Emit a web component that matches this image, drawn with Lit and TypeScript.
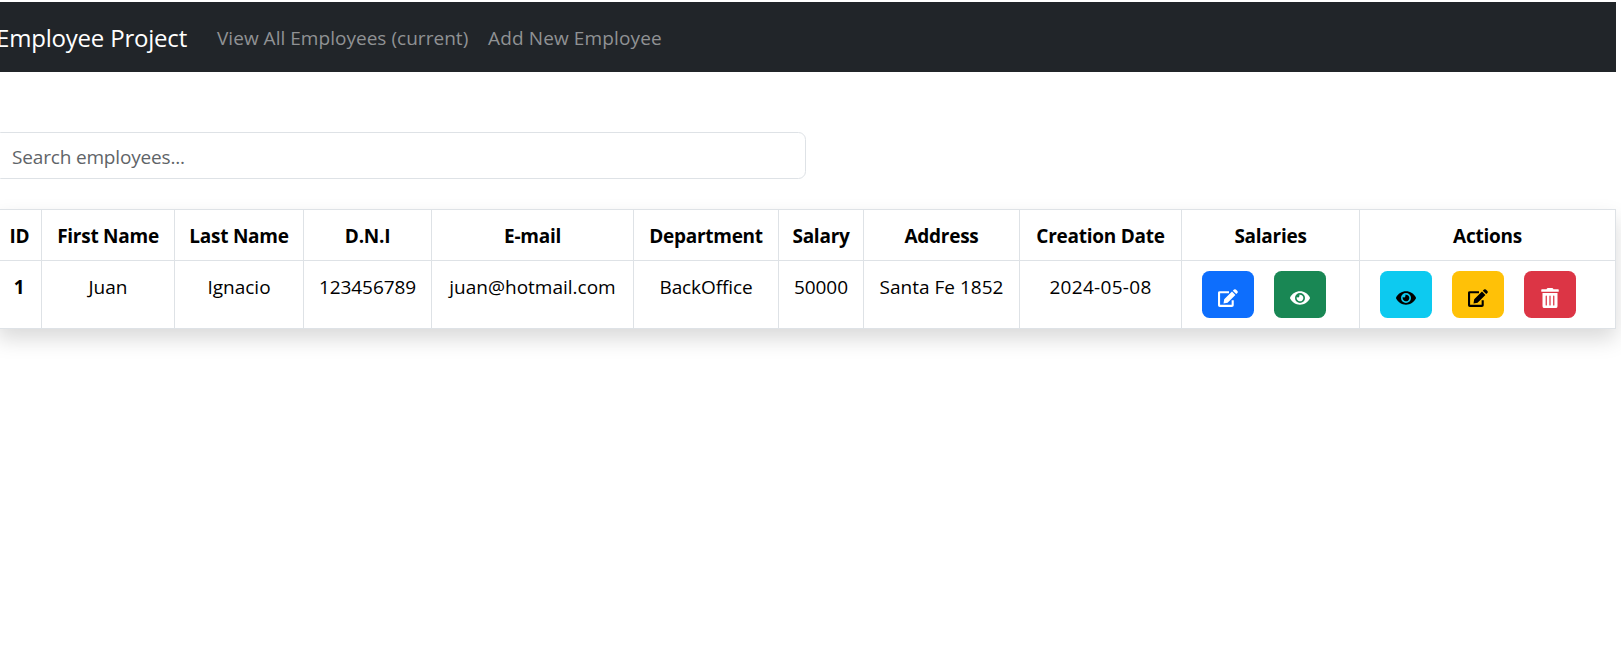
import { LitElement, html, css, svg } from "lit";
import { customElement } from "lit/decorators.js";

const EYE = svg`<svg class="icon" viewBox="0 0 576 512" width="20" height="18"><path fill="currentColor" d="M572.52 241.4C518.29 135.59 410.93 64 288 64S57.68 135.64 3.48 241.41a32.35 32.35 0 0 0 0 29.19C57.71 376.41 165.07 448 288 448s230.32-71.64 284.52-177.41a32.35 32.35 0 0 0 0-29.19zM288 400a144 144 0 1 1 144-144 143.93 143.93 0 0 1-144 144zm0-240a95.31 95.31 0 0 0-25.31 3.79 47.85 47.85 0 0 1-66.9 66.9A95.78 95.78 0 1 0 288 160z"/></svg>`;
const EDIT = svg`<svg class="icon" viewBox="0 0 20 18" width="20" height="18"><path fill="none" stroke="currentColor" stroke-width="2.1" d="M11 3.200H1.800Q1.050 3.200 1.050 3.900V16.200Q1.050 16.900 1.800 16.900H13.900Q14.700 16.900 14.700 16.200V11.200"/><path fill="currentColor" d="M14 2.500 17.400 5.900 9.600 13.700 5.500 14.500 6.200 10.300zM14.800 1.700 16 .6Q17 -.2 17.900.6L19.400 2.100Q20.200 3.100 19.400 3.900L18.200 5.100z"/></svg>`;
const TRASH = svg`<svg class="icon" viewBox="0 0 448 512" width="18" height="20"><path fill="currentColor" d="M32 464a48 48 0 0 0 48 48h288a48 48 0 0 0 48-48V128H32zm272-256a16 16 0 0 1 32 0v224a16 16 0 0 1-32 0zm-96 0a16 16 0 0 1 32 0v224a16 16 0 0 1-32 0zm-96 0a16 16 0 0 1 32 0v224a16 16 0 0 1-32 0zM432 32H312l-9.400-18.700A24 24 0 0 0 281.100 0H166.800a23.720 23.720 0 0 0-21.400 13.300L136 32H16A16 16 0 0 0 0 48v32a16 16 0 0 0 16 16h416a16 16 0 0 0 16-16V48a16 16 0 0 0-16-16z"/></svg>`;

@customElement("app-root")
export class AppRoot extends LitElement {
  static styles = css`
    :host { display: flow-root; height: 665px; overflow: hidden; background: #fff; color: #000;
      font: 19px/30px "Open Sans", "Noto Sans", sans-serif; }
    * { box-sizing: border-box; }
    nav { display: flex; align-items: center; height: 70px; width: 1616px; margin-top: 2px; padding-top: 2px; background: #212529; }
    a { color: #909294; text-decoration: none; white-space: nowrap; }
    .brand { color: #fff; font-size: 24px; margin-left: -4px; width: 221px; letter-spacing: -0.2px; }
    .view { width: 271px; letter-spacing: 0.03px; }
    .add { letter-spacing: 0.13px; }
    input { display: block; margin: 60px 0 0 -7px; width: 813px; height: 47px; padding: 3px 18px 0; border: 1px solid #dee2e6;
      border-radius: 7.5px; font: inherit; letter-spacing: -0.17px; outline: 0; background: #fff; }
    input::placeholder { color: #5f6468; opacity: 1; }
    table { table-layout: fixed; border-collapse: separate; border-spacing: 0; width: 1619px; margin: 30px 0 0 -3px;
      border: solid #dee2e6; border-width: 1px 0 0 1px; box-shadow: 0 10px 20px rgba(0,0,0,.15); text-align: center; }
    th, td { border: solid #dee2e6; border-width: 0 1px 1px 0; padding: 11px 0 0; vertical-align: top; white-space: nowrap; letter-spacing: 0; }
    th { font-weight: 700; letter-spacing: -0.26px; }
    td.digits { letter-spacing: -0.1px; }
    td.date { letter-spacing: 0.3px; }
    thead th { height: 51px; }
    tbody > tr > * { height: 68px; }
    tbody th { padding-right: 1px; }
    .cell { padding: 10px 0 0 20px; }
    .buttons { display: flex; gap: 20px; }
    button { display: flex; justify-content: center; align-items: flex-start; width: 52px; height: 47px; padding: 18px 0 0; border: 0; border-radius: 7.5px; color: #fff; }
    .icon { display: block; }
    .blue { background: #0d6efd; } .green { background: #198754; }
    .cyan { background: #0dcaf0; color: #000; } .yellow { background: #ffc107; color: #000; }
    .red { background: #dc3545; padding-top: 17px; }
  `;
  private cols: [string, number, string, string][] = [
    ["ID", 44, "1", ""], ["First Name", 133, "Juan", ""], ["Last Name", 129, "Ignacio", ""], ["D.N.I", 128, "123456789", "digits"],
    ["E-mail", 202, "juan@hotmail.com", ""], ["Department", 145, "BackOffice", "digits"], ["Salary", 85, "50000", "digits"],
    ["Address", 156, "Santa Fe 1852", ""], ["Creation Date", 162, "2024-05-08", "date"], ["Salaries", 178, "", ""], ["Actions", 256, "", ""],
  ];
  render() {
    return html`
      <nav><a class="brand">Employee Project</a><a class="view">View All Employees (current)</a><a class="add">Add New Employee</a></nav>
      <input placeholder="Search employees..." />
      <table>
        <colgroup>${this.cols.map((c) => html`<col style="width:${c[1]}px" />`)}</colgroup>
        <thead><tr>${this.cols.map((c) => html`<th>${c[0]}</th>`)}</tr></thead>
        <tbody><tr>
          ${this.cols.slice(0, 9).map((c, i) => (i ? html`<td class=${c[3]}>${c[2]}</td>` : html`<th>${c[2]}</th>`))}
          <td class="cell"><div class="buttons"><button class="blue">${EDIT}</button><button class="green">${EYE}</button></div></td>
          <td class="cell"><div class="buttons"><button class="cyan">${EYE}</button><button class="yellow">${EDIT}</button><button class="red">${TRASH}</button></div></td>
        </tr></tbody>
      </table>`;
  }
}
